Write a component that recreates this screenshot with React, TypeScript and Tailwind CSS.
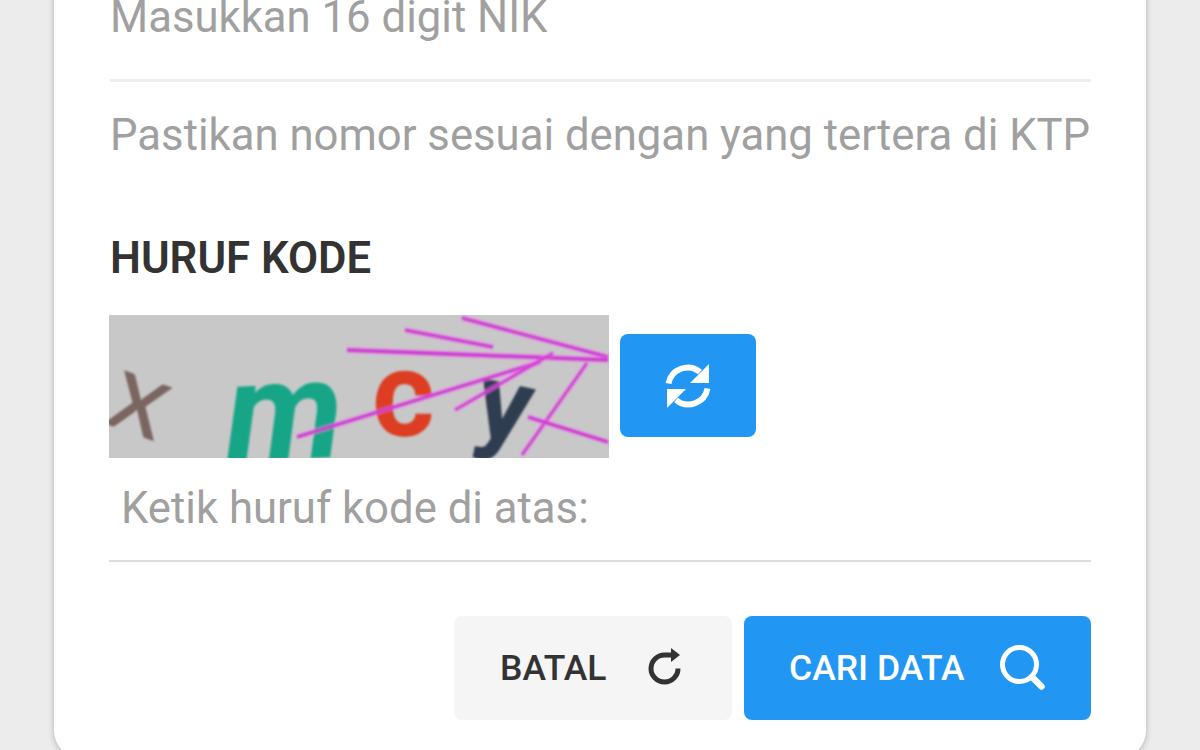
function Captcha() {
  const lines = [
    [462, 318, 608, 357, 3],
    [405, 330, 493, 347, 3],
    [347, 350, 608, 360, 3.5],
    [297, 437, 540, 362, 3],
    [455, 410, 553, 353, 2.5],
    [522, 455, 587, 363, 2.5],
    [528, 417, 608, 442, 3],
  ];
  return (
    <svg width="500" height="143" viewBox="109 315 500 143" className="block shrink-0 bg-[#c8c8c8]">
      <defs>
        <filter id="b" x="-10%" y="-10%" width="120%" height="120%">
          <feGaussianBlur stdDeviation="1.1" />
        </filter>
      </defs>
      <g filter="url(#b)">
        <text x="-28" y="29" fontFamily="Lato, sans-serif" fontSize="112" fill="#7a6560" transform="translate(139 405) rotate(20)">x</text>
        <text x="0" y="0" fontFamily="Roboto, sans-serif" fontWeight="700" fontStyle="italic" fontSize="140" fill="#12a586" transform="translate(227 461) rotate(-2)">m</text>
        <text x="0" y="0" fontFamily="Roboto, sans-serif" fontWeight="700" fontSize="120" fill="#dd3d20" transform="translate(372 436)">c</text>
        <text x="0" y="0" fontFamily="Roboto, sans-serif" fontWeight="700" fontSize="108" fill="#2e3c50" transform="translate(471 434) rotate(12)">y</text>
        {lines.map(([a, b, c, d, w], i) => (
          <g key={i}>
            <line x1={a} y1={b} x2={c} y2={d} stroke="#ff6cf6" strokeWidth={w + 3} opacity="0.45" />
            <line x1={a} y1={b} x2={c} y2={d} stroke="#c93ad0" strokeWidth={w} />
          </g>
        ))}
      </g>
    </svg>
  );
}

function SyncIcon() {
  return (
    <svg width="46" height="46" viewBox="0 0 46 46" fill="none" className="text-white">
      <path d="M3.500 20.500A19.500 19.500 0 0 1 35 9" stroke="currentColor" strokeWidth="6" />
      <path d="M44 1V20H25Z" fill="currentColor" />
      <path d="M42.500 25.500A19.500 19.500 0 0 1 11 37" stroke="currentColor" strokeWidth="6" />
      <path d="M2 45V26H21Z" fill="currentColor" />
    </svg>
  );
}

function RedoIcon() {
  return (
    <svg width="34" height="40" viewBox="0 0 34 40" fill="none" className="text-[#333333]">
      <path d="M30 20.500A13.500 13.500 0 1 1 16.500 7H24" stroke="currentColor" strokeWidth="5" />
      <path d="M23 0L32 7L23 14Z" fill="currentColor" />
    </svg>
  );
}

function SearchIcon() {
  return (
    <svg width="46" height="46" viewBox="0 0 46 46" fill="none" className="-translate-y-px text-white">
      <circle cx="20.500" cy="20.500" r="17" stroke="currentColor" strokeWidth="5" />
      <path d="M33 33L42.500 42.500" stroke="currentColor" strokeWidth="6.500" strokeLinecap="round" />
    </svg>
  );
}

export default function App() {
  return (
    <div className="h-[750px] overflow-hidden bg-[#ececec] px-[54px] font-['Roboto',sans-serif]">
      <div className="mt-[-60px] flex flex-col rounded-[30px] bg-white px-[55px] pb-[40px] shadow-[0_1px_6px_rgba(0,0,0,0.25)]">
        <div className="mt-[52px] h-[50px] pl-px text-[43.7px] leading-[50px] text-[#a0a0a0]">Masukkan 16 digit NIK</div>
        <div className="ml-px mt-[37px] h-[3px] bg-[#eeeeee]" />
        <div className="mt-[28px] whitespace-nowrap text-[43.7px] leading-[50px] text-[#a0a0a0]">
          <span className="pl-px">Pastikan nomor sesuai dengan yang tertera di KTP</span>
        </div>
        <div className="mt-[73px] text-[43.7px] font-semibold leading-[50px] text-[#333333]">
          <span className="pl-px">HURUF KODE</span>
        </div>
        <div className="mt-[32px] flex items-start gap-[11px]">
          <Captcha />
          <button className="mt-[19px] flex h-[103px] w-[136px] items-center justify-center rounded-lg bg-[#2196f3]">
            <SyncIcon />
          </button>
        </div>
        <div className="pl-[12px] pt-[25px] text-[43.7px] leading-[50px] text-[#a0a0a0]">Ketik huruf kode di atas:</div>
        <div className="mt-[27px] h-[2px] bg-[#dddddd]" />
        <div className="mt-[54px] flex justify-end gap-[12px]">
          <button className="flex h-[104px] w-[278px] items-center gap-[41px] rounded-lg bg-[#f5f5f5] pl-[46px] text-[35.5px] font-medium text-[#333333]">
            <span className="pt-[2px]">BATAL</span>
            <RedoIcon />
          </button>
          <button className="flex h-[104px] w-[347px] items-center gap-[34px] rounded-lg bg-[#2196f3] pl-[45px] text-[35.5px] font-medium text-white">
            <span className="pt-[2px]">CARI DATA</span>
            <SearchIcon />
          </button>
        </div>
      </div>
    </div>
  );
}
